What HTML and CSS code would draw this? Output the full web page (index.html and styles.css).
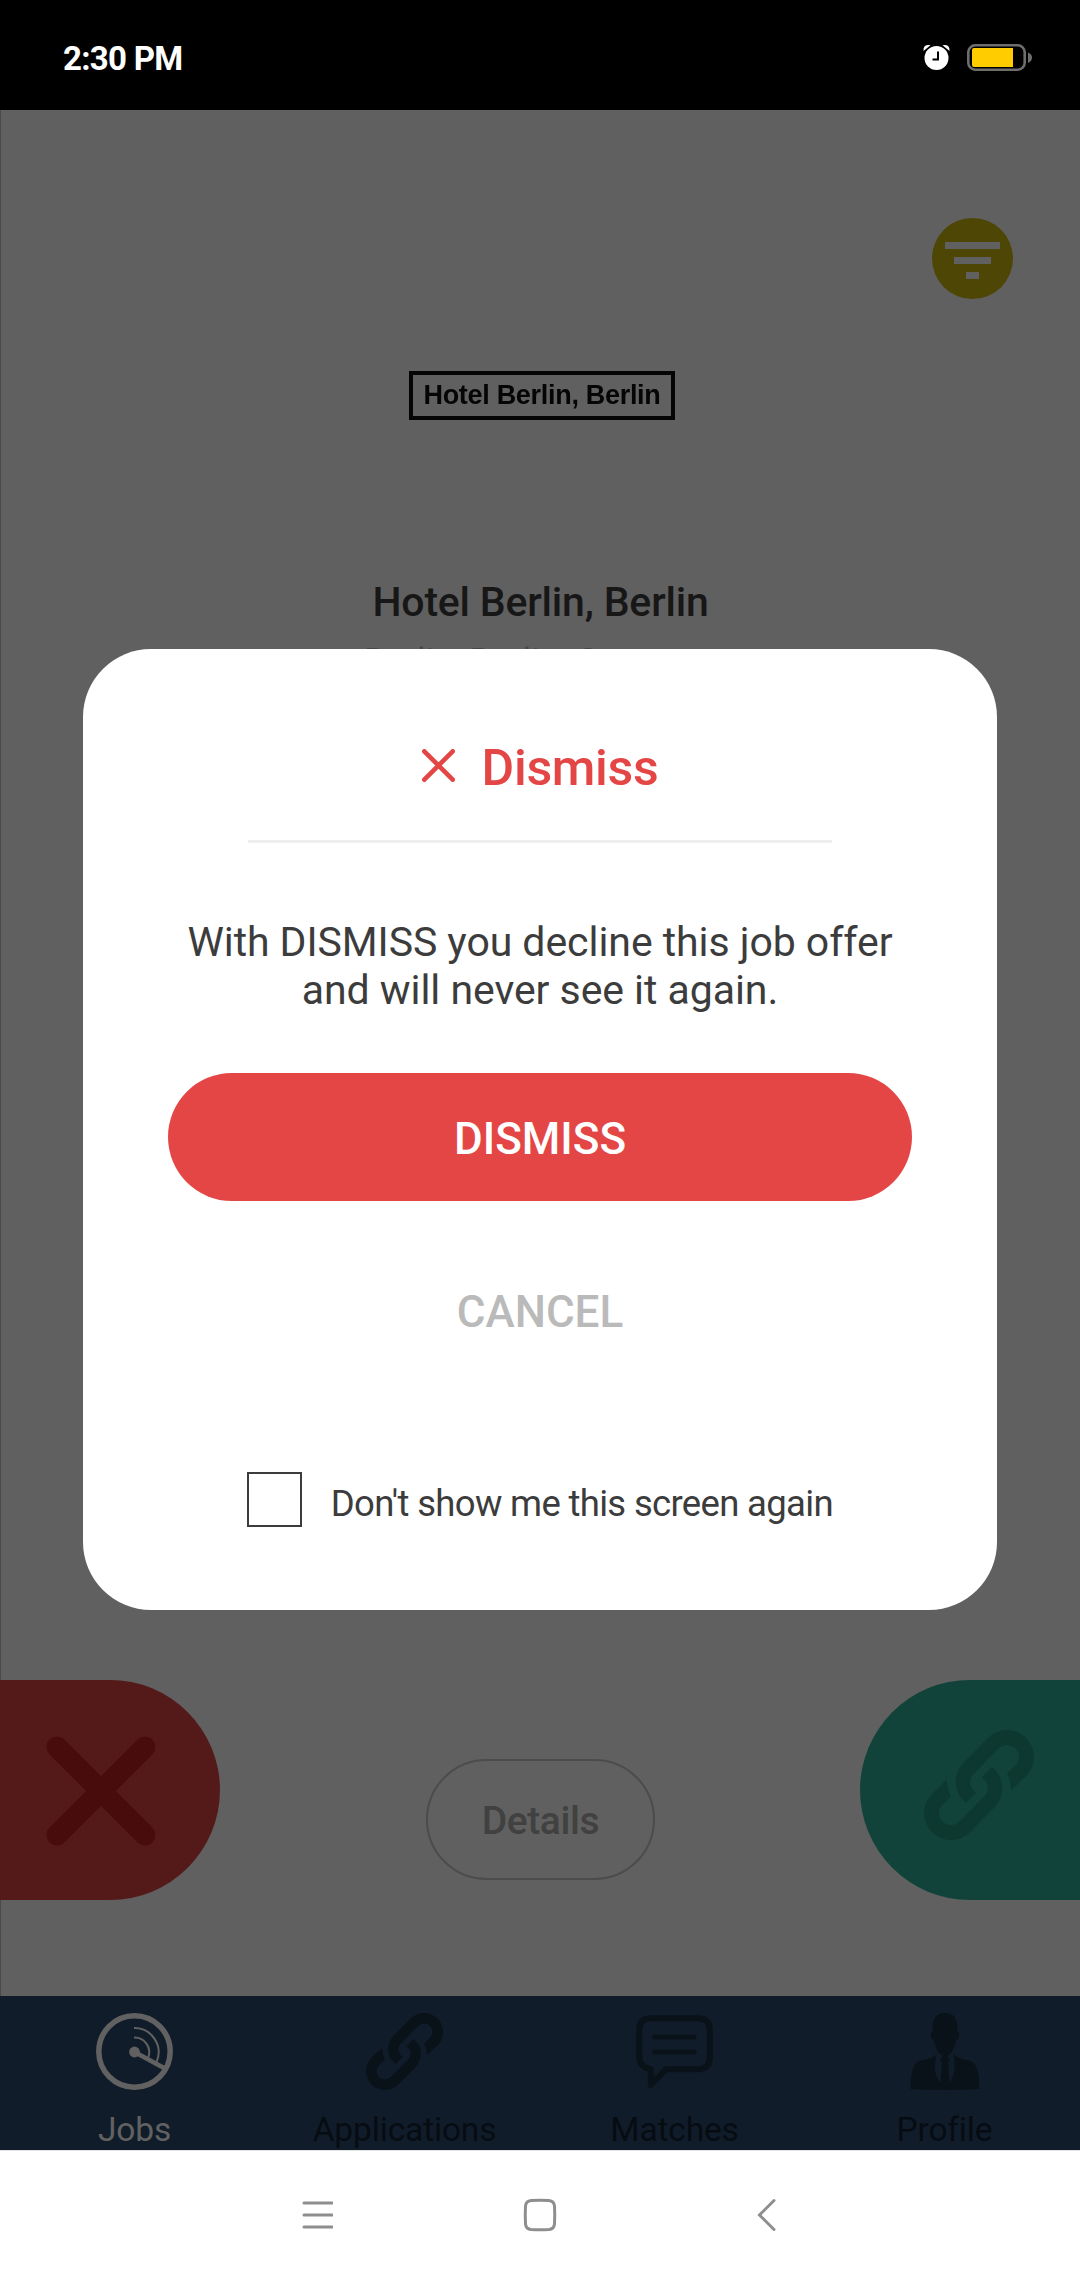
FILE: index.html
```html
<!DOCTYPE html>
<html lang="en">
<head>
<meta charset="utf-8">
<title>Jobs</title>
<link rel="stylesheet" href="styles.css">
</head>
<body>
<svg width="0" height="0" class="defs" aria-hidden="true">
  <defs>
    <path id="half-link" d="M87 60.500 102.100 46.100A27 27 0 0 0 63.900 7.900L39.200 33A27 27 0 0 0 42.200 73L52.200 62.500A12 12 0 0 1 49.800 43.500L74.500 18.500A12 12 0 0 1 91.500 35.500L83 43.500Q87.500 52 87 60.500Z"/>
    <symbol id="link" viewBox="0 0 110 110">
      <use href="#half-link"/>
      <use href="#half-link" transform="rotate(180 55 55)"/>
    </symbol>
  </defs>
</svg>

<header class="status">
  <span class="clock">2:30 PM</span>
  <svg class="status-icons" width="112" height="30" viewBox="0 0 112 30">
    <circle cx="14.500" cy="16" r="12" fill="#fff"/>
    <path d="M1.500 9Q1 2 8.500 3.200M27.500 9Q28 2 20.500 3.200" fill="#fff"/>
    <path d="M16 9.500V17.500H10.500" fill="none" stroke="#000" stroke-width="2"/>
    <rect x="46.300" y="3.300" width="56.400" height="24.400" rx="7" fill="none" stroke="#6e6e6e" stroke-width="2.600"/>
    <path d="M52 6H91V25H52Q50 25 50 23V8Q50 6 52 6Z" fill="#fc0"/>
    <path d="M106 10.500Q110 12 110 15.500T106 21Z" fill="#6e6e6e"/>
  </svg>
</header>

<main class="screen">
  <div class="toolbar">
    <svg class="filter" width="81" height="81" viewBox="0 0 81 81">
      <circle cx="40.500" cy="40.500" r="40.500" fill="#4d4605"/>
      <path d="M13 24H68V31H13ZM22 39H59V46H22ZM34 54H47V61H34Z" fill="#606060"/>
    </svg>
  </div>
  <div class="logo">Hotel Berlin, Berlin</div>
  <h1 class="company">Hotel Berlin, Berlin</h1>
  <p class="place">Berlin, Berlin, Germany</p>
  <div class="actions">
    <button class="swipe no">
      <svg width="110" height="110" viewBox="0 0 110 110"><path d="M11 11 99 99M99 11 11 99" stroke="#490c0c" stroke-width="21" stroke-linecap="round"/></svg>
    </button>
    <button class="details">Details</button>
    <button class="swipe yes">
      <svg width="110" height="110"><use href="#link"/></svg>
    </button>
  </div>
</main>

<nav class="tabs">
  <a class="tab active">
    <svg width="77" height="77" viewBox="0 0 77 77" fill="none" stroke="currentColor">
      <circle cx="38.500" cy="38.500" r="35.700" stroke-width="5.500"/>
      <circle cx="38.500" cy="39" r="5.400" fill="currentColor" stroke="none"/>
      <path d="M38.500 39 68 55" stroke-width="4.600"/>
      <path d="M38 24.500A14.700 14.700 0 0 1 52 45M38 15A24.200 24.200 0 0 1 60.500 49" stroke-width="2"/>
    </svg>
    <span>Jobs</span>
  </a>
  <a class="tab">
    <svg width="77" height="77"><use href="#link"/></svg>
    <span>Applications</span>
  </a>
  <a class="tab">
    <svg width="77" height="77" viewBox="0 0 77 77" fill="none" stroke="#081218" stroke-width="6" stroke-linejoin="round" stroke-linecap="round">
      <path d="M14.800 56.200Q3.200 54 3.200 43V17Q3.200 5.200 15 5.200H62Q73.800 5.200 73.800 17V44Q73.800 56.200 62 56.200H30L14.800 72Z"/>
      <path d="M19 24H58M19 39H58" stroke-width="5.200"/>
    </svg>
    <span>Matches</span>
  </a>
  <a class="tab">
    <svg width="77" height="77" viewBox="0 0 77 77">
      <path d="M39 0C48 0 52 6 51.500 19Q54 19 52.800 24 52 27.500 50 27.500C49 34 47 37 45 40 42 44 36 44 33 40 31 37 29 34 28 27.500Q26 27.500 25 24 24 19 26.500 19C26 6 30 0 39 0Z"/>
      <path d="M30.500 41Q28 45 15 47.500C7 50 5 57 4.600 76Q20 77 39 77T73.400 76C73 57 71 50 63 47.500 54 46 50 44 47.500 41 50 55 48.500 62 43.500 70L42 49 44 49 41.500 43H36.500L34 49H36L34.500 70C28 62 28 54 30.500 41Z"/>
      <path d="M36.500 49H41.500L43.500 70 39 77 34.500 70Z"/>
    </svg>
    <span>Profile</span>
  </a>
</nav>

<footer class="system">
  <svg width="32" height="34" viewBox="0 0 32 34"><path d="M3 5H31M3 17H31M3 29H31"/></svg>
  <svg class="home" width="34" height="34" viewBox="0 0 34 34"><path d="M8 2.500Q17 2 26 2.500 31 3 31.500 8 32 17 31.500 26 31 31 26 31.500 17 32 8 31.500 3 31 2.500 26 2 17 2.500 8 3 3 8 2.500Z"/></svg>
  <svg width="32" height="34" viewBox="0 0 32 34"><path d="M23 2.500 8.500 17 23 31.500"/></svg>
</footer>

<section class="modal" role="dialog">
  <h2 class="modal-title">
    <svg width="33" height="33" viewBox="0 0 33 33"><path d="M2.300 2.300 30.700 30.700M30.700 2.300 2.300 30.700" stroke="#e44646" stroke-width="4.600" stroke-linecap="round"/></svg>
    <span>Dismiss</span>
  </h2>
  <p class="message">With DISMISS you decline this job offer<br>and will never see it again.</p>
  <button class="dismiss">DISMISS</button>
  <button class="cancel">CANCEL</button>
  <label class="again"><span class="box"></span><span class="again-text">Don't show me this screen again</span></label>
</section>
</body>
</html>
```
FILE: styles.css
```css
* { box-sizing: border-box; margin: 0; padding: 0; }
body {
  position: relative;
  width: 1080px;
  height: 2280px;
  display: flex;
  flex-direction: column;
  overflow: hidden;
  background: #fff;
  font-family: Roboto, sans-serif;
}
button { border: 0; background: none; font-family: inherit; }
svg { display: block; flex: none; }
.defs { position: absolute; }

.status {
  height: 110px;
  padding: 4px 46px 0 63px;
  display: flex;
  justify-content: space-between;
  align-items: center;
  background: #000;
  color: #fff;
}
.clock { font-size: 33px; font-weight: 700; letter-spacing: -.7px; padding-top: 3px; }

.screen {
  height: 1886px;
  display: flex;
  flex-direction: column;
  align-items: center;
  background: #606060;
  border-left: 1px solid #4a4a4a;
}
.toolbar {
  align-self: stretch;
  display: flex;
  justify-content: flex-end;
  padding: 108px 67px 0 0;
}
.logo {
  width: 266px;
  height: 49px;
  margin: 72px 0 0 3px;
  border: 4px solid #050505;
  font: bold 27px/40px "Liberation Sans", sans-serif;
  letter-spacing: -.3px;
  text-align: center;
  white-space: nowrap;
  color: #050505;
  filter: blur(.6px);
}
.company {
  margin-top: 158px;
  font-size: 41px;
  font-weight: 500;
  line-height: 48px;
  letter-spacing: -.2px;
  color: #171717;
}
.place {
  margin-top: 15px;
  font-size: 35.500px;
  line-height: 40px;
  color: #484848;
}
.actions {
  width: 1080px;
  margin: auto 0 96px -1px;
  display: flex;
  justify-content: space-between;
}
.swipe { width: 220px; height: 220px; display: flex; align-items: center; }
.no { padding: 1px 0 0 46px; border-radius: 0 110px 110px 0; background: #541a1a; }
.yes { padding: 0 0 10px 64px; border-radius: 110px 0 0 110px; background: #11433a; fill: #0d382f; }
.details {
  width: 229px;
  height: 121px;
  margin-top: 79px;
  padding: 2px 0 0 1px;
  border: 2px solid #4c4c4c;
  border-radius: 61px;
  font-size: 39px;
  font-weight: 500;
  letter-spacing: -.4px;
  color: #414141;
}

.tabs {
  height: 154px;
  display: grid;
  grid-template-columns: repeat(4, 1fr);
  background: #101c29;
}
.tab {
  display: flex;
  flex-direction: column;
  align-items: center;
  gap: 20px;
  padding: 17px 1px 0 0;
  font-size: 33.500px;
  line-height: 40px;
  letter-spacing: -.15px;
  color: #070c13;
  fill: #081218;
}
.active { color: #616161; }

.system {
  height: 130px;
  border-top: 1px solid #e4e4e4;
  padding: 0 297px 1px 301px;
  display: flex;
  justify-content: space-between;
  align-items: center;
  fill: none;
  stroke: #8e8e8e;
  stroke-width: 3px;
  stroke-linecap: round;
}
.home { margin-right: 4px; }

.modal {
  position: absolute;
  left: 83px;
  top: 649px;
  width: 914px;
  height: 961px;
  padding-top: 89px;
  border-radius: 68px;
  background: #fff;
  display: flex;
  flex-direction: column;
  align-items: center;
}
.modal-title {
  width: 584px;
  height: 105px;
  border-bottom: 3px solid #eee;
  display: flex;
  justify-content: center;
  gap: 27px;
  font-size: 50px;
  font-weight: 500;
  line-height: 60px;
  letter-spacing: -.3px;
  color: #e44646;
}
.modal-title svg { margin-top: 11px; }
.message {
  margin-top: 75px;
  font-size: 41px;
  line-height: 48px;
  letter-spacing: -.06px;
  text-align: center;
  color: #3c3c3c;
}
.dismiss, .cancel { font-size: 44px; font-weight: 500; }
.dismiss {
  width: 744px;
  height: 128px;
  margin-top: 59px;
  padding-top: 4px;
  border-radius: 64px;
  background: #e44646;
  color: #fff;
}
.cancel {
  height: 128px;
  margin-top: 47px;
  color: #bababa;
}
.again {
  width: 586px;
  margin-top: 96px;
  display: flex;
  align-items: center;
  justify-content: space-between;
}
.box { width: 55px; height: 55px; border: 2px solid #3c3c3c; }
.again-text { font-size: 36.500px; letter-spacing: -.67px; padding-top: 7px; white-space: nowrap; color: #3c3c3c; }
```
